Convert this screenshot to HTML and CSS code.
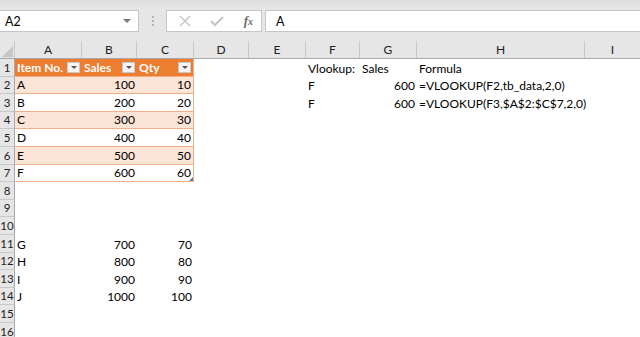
FILE: index.html
```html
<!DOCTYPE html>
<html lang="en">
<head>
  <meta charset="UTF-8">
  <title>Book1 - Excel</title>
  <link rel="stylesheet" href="styles.css">
</head>
<body>
  <div class="formula-bar">
    <div class="name-box">
      <span>A2</span>
      <span class="caret"></span>
    </div>
    <div class="grip"><i></i><i></i><i></i></div>
    <div class="fx-box">
      <svg class="btn" width="12" height="12" viewBox="0 0 12 12"><path d="M1 1L11 11M11 1L1 11" stroke="#c4c4c4" stroke-width="1.4" fill="none"/></svg>
      <svg class="btn" width="14" height="12" viewBox="0 0 14 12"><path d="M1 6L5 10L13 2" stroke="#c4c4c4" stroke-width="2" fill="none"/></svg>
      <span class="fx">f<small>x</small></span>
    </div>
    <div class="formula-input">A</div>
  </div>

  <div class="sheet">
    <div class="row col-heads">
      <div class="corner"></div>
      <div>A</div><div>B</div><div>C</div><div>D</div><div>E</div>
      <div>F</div><div>G</div><div>H</div><div>I</div>
    </div>

    <div class="row">
      <div class="rh">1</div>
      <div class="t th">Item No.<span class="filter"></span></div>
      <div class="t th">Sales<span class="filter"></span></div>
      <div class="t th last">Qty<span class="filter"></span></div>
      <div></div><div></div>
      <div>Vlookup:</div><div>Sales</div><div>Formula</div><div></div>
    </div>
    <div class="row">
      <div class="rh">2</div>
      <div class="t band">A</div><div class="t band num">100</div><div class="t band num last">10</div>
      <div></div><div></div>
      <div>F</div><div class="num">600</div><div>=VLOOKUP(F2,tb_data,2,0)</div><div></div>
    </div>
    <div class="row">
      <div class="rh">3</div>
      <div class="t">B</div><div class="t num">200</div><div class="t num last">20</div>
      <div></div><div></div>
      <div>F</div><div class="num">600</div><div>=VLOOKUP(F3,$A$2:$C$7,2,0)</div><div></div>
    </div>
    <div class="row">
      <div class="rh">4</div>
      <div class="t band">C</div><div class="t band num">300</div><div class="t band num last">30</div>
      <div></div><div></div><div></div><div></div><div></div><div></div>
    </div>
    <div class="row">
      <div class="rh">5</div>
      <div class="t">D</div><div class="t num">400</div><div class="t num last">40</div>
      <div></div><div></div><div></div><div></div><div></div><div></div>
    </div>
    <div class="row">
      <div class="rh">6</div>
      <div class="t band">E</div><div class="t band num">500</div><div class="t band num last">50</div>
      <div></div><div></div><div></div><div></div><div></div><div></div>
    </div>
    <div class="row">
      <div class="rh">7</div>
      <div class="t">F</div><div class="t num">600</div><div class="t num last">60<span class="handle"></span></div>
      <div></div><div></div><div></div><div></div><div></div><div></div>
    </div>
    <div class="row"><div class="rh">8</div></div>
    <div class="row"><div class="rh">9</div></div>
    <div class="row"><div class="rh">10</div></div>
    <div class="row">
      <div class="rh">11</div>
      <div>G</div><div class="num">700</div><div class="num">70</div>
    </div>
    <div class="row">
      <div class="rh">12</div>
      <div>H</div><div class="num">800</div><div class="num">80</div>
    </div>
    <div class="row">
      <div class="rh">13</div>
      <div>I</div><div class="num">900</div><div class="num">90</div>
    </div>
    <div class="row">
      <div class="rh">14</div>
      <div>J</div><div class="num">1000</div><div class="num">100</div>
    </div>
    <div class="row"><div class="rh">15</div></div>
    <div class="row"><div class="rh">16</div></div>
  </div>
</body>
</html>
```

FILE: styles.css
```css
body {
  margin: 0;
  width: 640px;
  height: 337px;
  overflow: hidden;
  background: #fff;
  font-family: Lato, "Open Sans", sans-serif;
  font-size: 12px;
  color: #000;
}
.formula-bar {
  display: flex;
  align-items: center;
  height: 41px;
  padding-top: 1px;
  box-sizing: border-box;
  background: linear-gradient(#dcdcdc 0, #e6e6e6 8px, #e6e6e6 100%);
}
.name-box, .fx-box, .formula-input {
  height: 22px;
  box-sizing: border-box;
  background: #fff;
  border: 1px solid #c6c6c6;
  display: flex;
  align-items: center;
}
.name-box {
  width: 140px;
  margin-left: -1px;
  padding: 0 5px 0 5px;
  justify-content: space-between;
  font-size: 12.5px;
}
.caret {
  border-left: 4px solid transparent;
  border-right: 4px solid transparent;
  border-top: 4px solid #7a7a7a;
  margin-right: 2px;
}
.grip {
  width: 27px;
  display: flex;
  flex-direction: column;
  align-items: center;
  gap: 2px;
}
.grip i {
  width: 2px;
  height: 2px;
  background: #b4b4b4;
}
.fx-box {
  width: 96px;
  padding: 0 8px 0 12px;
  justify-content: space-between;
}
.fx {
  font-family: "Liberation Serif", serif;
  font-style: italic;
  font-weight: bold;
  font-size: 13px;
  color: #6b6b6b;
}
.fx small {
  font-size: 10px;
}
.formula-input {
  flex: 1;
  margin-left: 3px;
  margin-right: -1px;
  padding-left: 10px;
  font-size: 12.5px;
}
.row {
  display: grid;
  grid-template-columns: 15px 67px 55px 57px 55px 57px 54px 57px 168px 56px;
  height: 17.6px;
}
.row > div {
  position: relative;
  display: flex;
  align-items: flex-end;
  padding: 0 2px 1px 2px;
  box-sizing: border-box;
  line-height: 15px;
  white-space: nowrap;
}
.num {
  justify-content: flex-end;
}
.col-heads {
  height: 18px;
  background: #e6e6e6;
  border-bottom: 1px solid #a8a8a8;
  box-sizing: border-box;
}
.col-heads > div {
  justify-content: center;
  align-items: center;
  padding: 0;
  color: #222;
  border-right: 1px solid #c8c8c8;
}
.corner {
  border-right: 1px solid #c8c8c8;
}
.corner::after {
  content: "";
  position: absolute;
  right: 1px;
  bottom: 1px;
  border-left: 11px solid transparent;
  border-bottom: 11px solid #c6c6c6;
}
.row > .rh {
  background: #e6e6e6;
  border-right: 1px solid #a8a8a8;
  border-bottom: 1px solid #c8c8c8;
  justify-content: center;
  padding: 0 0 1px 0;
  color: #222;
  font-size: 11.5px;
}
.t {
  border-bottom: 1px solid #f4b084;
}
.t.last {
  border-right: 1px solid #f4b084;
}
.th {
  background: #ed7d31;
  color: #fff;
  font-weight: bold;
}
.band {
  background: #fce4d6;
}
.filter {
  position: absolute;
  right: 2px;
  top: 3px;
  width: 13px;
  height: 11px;
  box-sizing: border-box;
  background: #f4f4f4;
  border: 1px solid #c8c8c8;
}
.filter::after {
  content: "";
  position: absolute;
  left: 3px;
  top: 3px;
  border-left: 3px solid transparent;
  border-right: 3px solid transparent;
  border-top: 3px solid #555;
}
.handle {
  position: absolute;
  right: 0;
  bottom: 0;
  border-left: 4px solid transparent;
  border-bottom: 4px solid #4a7ebb;
}
```
